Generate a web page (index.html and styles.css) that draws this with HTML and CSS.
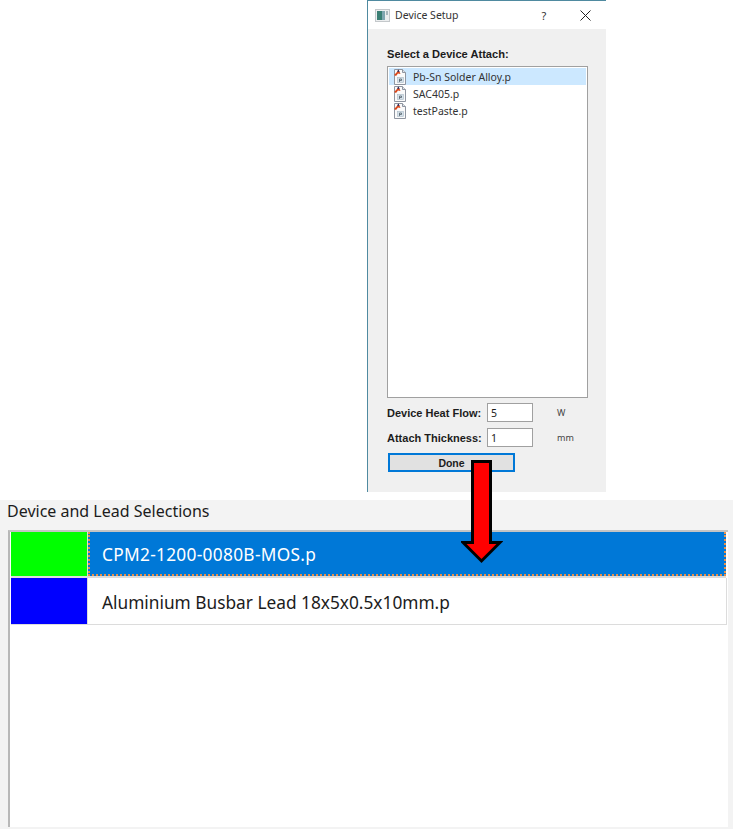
FILE: index.html
```html
<!DOCTYPE html>
<html lang="en">
<head>
    <meta charset="UTF-8">
    <title>Device Setup</title>
    <link rel="stylesheet" href="styles.css">
</head>
<body>

<svg width="0" height="0" class="defs">
    <symbol id="file-icon" viewBox="0 0 14 16">
        <path d="M1.5 .5H9.5L12.5 3.5V15.5H1.5Z" fill="#fafafa" stroke="#8f95a0"/>
        <path d="M9.5 .5V3.5H12.5" fill="#dfe3e8" stroke="#8f95a0"/>
        <path d="M1 6L4 3L5.5 .5L7.5 5L5 4.5L3 7Z" fill="#d9481c"/>
        <path d="M4 2.5L5.5 .5L6.5 3Z" fill="#1c2f6b"/>
        <rect x="4.5" y="8.5" width="6" height="5" fill="#d6e2ea" stroke="#a9bac6" stroke-width=".6"/>
        <path d="M6.5 13V10H8.5V11.5H6.5" fill="none" stroke="#44525c" stroke-width=".7"/>
    </symbol>
</svg>

<div class="dialog">
    <div class="titlebar">
        <svg class="app-icon" width="15" height="15" viewBox="0 0 15 15">
            <rect x="0" y="1" width="15" height="13" fill="#c4c8cb"/>
            <rect x="1" y="2" width="13" height="11" fill="#eceeef"/>
            <rect x="2" y="3" width="5" height="9" fill="#3a7f74"/>
            <rect x="7" y="3" width="3" height="9" fill="#7fa6b0"/>
            <rect x="11" y="3" width="2" height="4" fill="#aab8bd"/>
        </svg>
        <span class="title">Device Setup</span>
        <span class="help">?</span>
        <svg class="close" width="11" height="11" viewBox="0 0 11 11">
            <path d="M.5 .5L10.5 10.5M10.5 .5L.5 10.5" stroke="#222" fill="none"/>
        </svg>
    </div>
    <div class="dialog-body">
        <div class="heading">Select a Device Attach:</div>
        <div class="file-list">
            <div class="file-row selected">
                <svg class="file-svg"><use href="#file-icon"/></svg>
                <span>Pb-Sn Solder Alloy.p</span>
            </div>
            <div class="file-row">
                <svg class="file-svg"><use href="#file-icon"/></svg>
                <span>SAC405.p</span>
            </div>
            <div class="file-row">
                <svg class="file-svg"><use href="#file-icon"/></svg>
                <span>testPaste.p</span>
            </div>
        </div>
        <div class="field">
            <label>Device Heat Flow:</label>
            <div class="input-box">5</div>
            <span class="unit">W</span>
        </div>
        <div class="field">
            <label>Attach Thickness:</label>
            <div class="input-box">1</div>
            <span class="unit">mm</span>
        </div>
        <button class="done">Done</button>
    </div>
</div>

<div class="selections">
    <div class="selections-title">Device and Lead Selections</div>
    <div class="table">
        <div class="table-row current">
            <div class="swatch green"></div>
            <div class="cell">CPM2-1200-0080B-MOS.p</div>
        </div>
        <div class="table-row">
            <div class="swatch blue"></div>
            <div class="cell">Aluminium Busbar Lead 18x5x0.5x10mm.p</div>
        </div>
    </div>
</div>

<!-- red arrow lies over both windows -->
<svg class="arrow" width="42" height="104" viewBox="0 0 42 104">
    <path d="M11.5 1.5H29.5V82.5H39L20.5 101L2 82.5H11.5Z" fill="#ff0000" stroke="#000" stroke-width="3"/>
</svg>

</body>
</html>
```

FILE: styles.css
```css
body {
    margin: 0;
    background-color: #ffffff;
    color: #1c1c1c;
    font-family: "Noto Sans", sans-serif;
    position: relative;
    height: 829px;
    overflow: hidden;
}
.defs {
    position: absolute;
}

/* Dialog */
.dialog {
    margin-left: 367px;
    width: 239px;
    height: 492px;
    box-sizing: border-box;
    border-left: 1px solid #4f8aa0;
    border-top: 1px solid #4f8aa0;
    background-color: #f0f0f0;
    display: flex;
    flex-direction: column;
}
.titlebar {
    height: 28px;
    background-color: #ffffff;
    display: flex;
    align-items: center;
    padding-left: 7px;
    flex-shrink: 0;
}
.title {
    font-size: 10.5px;
    margin-left: 5px;
    color: #333;
}
.help {
    font-size: 11px;
    margin-left: 83px;
    color: #333;
}
.close {
    margin-left: 34px;
}
.dialog-body {
    padding: 18px 18px 0 19px;
    display: flex;
    flex-direction: column;
}
.heading {
    font-family: "Liberation Sans", sans-serif;
    font-weight: bold;
    font-size: 11.1px;
    line-height: 14px;
    margin-bottom: 5px;
}
.file-list {
    height: 332px;
    box-sizing: border-box;
    border: 1px solid #a0a0a0;
    background-color: #ffffff;
    padding: 1px;
    margin-bottom: 2px;
}
.file-row {
    height: 17px;
    display: flex;
    align-items: center;
    font-size: 10.5px;
    color: #333;
}
.file-row.selected {
    background-color: #cce8ff;
}
.file-svg {
    width: 14px;
    height: 16px;
    margin-left: 4px;
    margin-right: 6px;
}
.field {
    height: 25px;
    display: flex;
    align-items: center;
}
.field label {
    width: 100px;
    font-family: "Liberation Sans", sans-serif;
    font-weight: bold;
    font-size: 11px;
}
.input-box {
    width: 46px;
    height: 19px;
    box-sizing: border-box;
    border: 1px solid #a0a0a0;
    background-color: #ffffff;
    font-size: 10.5px;
    line-height: 18px;
    padding-left: 3px;
}
.unit {
    font-size: 9px;
    margin-left: 24px;
    color: #444;
}
.done {
    width: 127px;
    height: 19px;
    margin: 3px 0 0 1px;
    padding: 0;
    border: 1px solid #0078d7;
    box-shadow: inset 0 0 0 1px #0078d7;
    background-color: #e1e1e1;
    font-family: "Liberation Sans", sans-serif;
    font-weight: bold;
    font-size: 10.5px;
    color: #1c1c1c;
}

/* Lower selections panel */
.selections {
    margin-top: 8px;
    height: 329px;
    box-sizing: border-box;
    background-color: #f3f3f3;
    padding: 0 5px 2px 8px;
    display: flex;
    flex-direction: column;
}
.selections-title {
    height: 30px;
    font-size: 16px;
    line-height: 23px;
    margin-left: -1px;
    white-space: nowrap;
    color: #1c1c1c;
}
.table {
    flex: 1;
    border-top: 2px solid #c4c4c4;
    border-left: 2px solid #b8b8b8;
    background-color: #ffffff;
    padding-left: 1px;
}
.table-row {
    display: flex;
    height: 46px;
    margin-right: 1px;
    border-bottom: 1px solid #dcdcdc;
    border-right: 1px solid #dcdcdc;
}
.table-row.current {
    height: 44px;
    margin-right: 2px;
    border-bottom: 2px solid #dcdcdc;
    border-right: none;
}
.swatch {
    width: 76px;
    flex-shrink: 0;
    border-right: 1px solid #dcdcdc;
}
.swatch.green {
    background-color: #00ff00;
}
.swatch.blue {
    background-color: #0000ff;
}
.cell {
    flex: 1;
    padding: 2px 0 0 14px;
    font-size: 17.3px;
    display: flex;
    align-items: center;
    color: #1c1c1c;
}
.current .cell {
    background-color: #0078d7;
    color: #ffffff;
    padding-left: 12px;
    letter-spacing: .3px;
    border: 2px dotted #e8904a;
    border-top: none;
}

.arrow {
    position: absolute;
    left: 461px;
    top: 460px;
}
```
